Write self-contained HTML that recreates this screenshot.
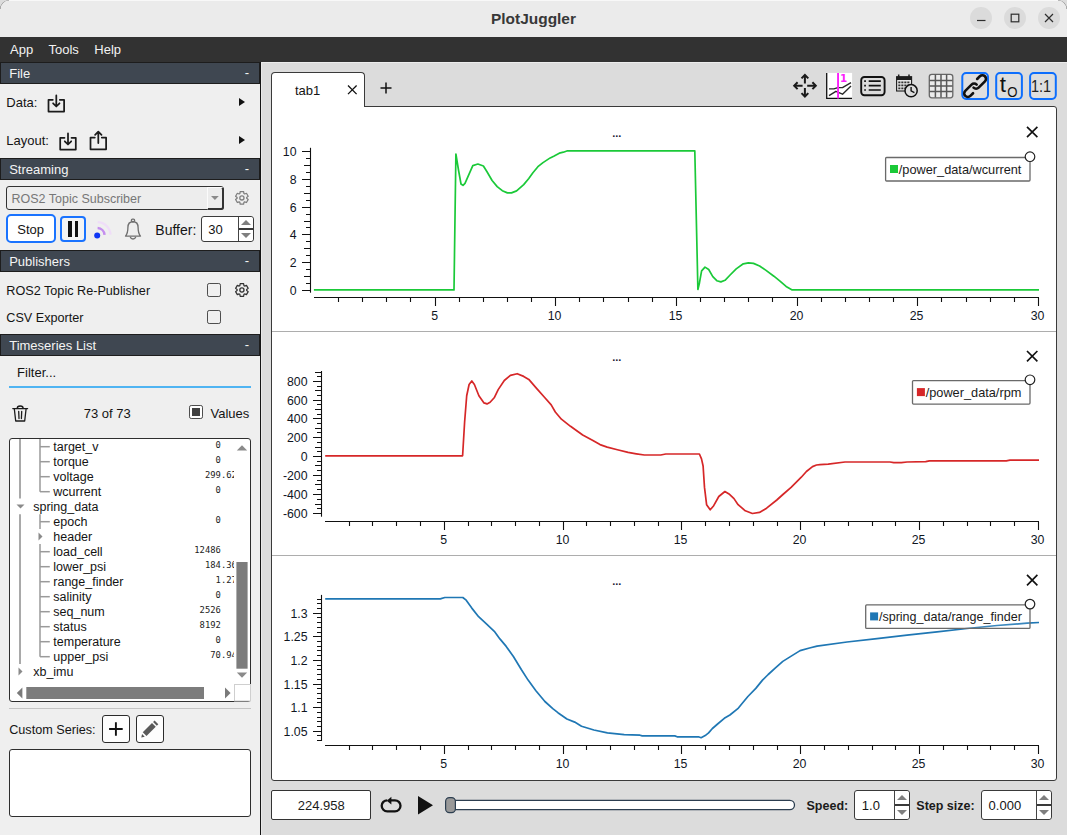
<!DOCTYPE html><html><head><meta charset="utf-8"><title>PlotJuggler</title><style>
*{box-sizing:border-box;margin:0;padding:0}
html,body{width:1067px;height:835px;overflow:hidden;background:#dcdcdc}
body{font-family:"Liberation Sans", "DejaVu Sans", sans-serif;font-size:13px;color:#141414;position:relative}
.abs{position:absolute}
#win{position:absolute;left:0;top:0;width:1067px;height:835px;background:#efefef;border-radius:9px 9px 0 0;overflow:hidden}
#title{position:absolute;left:0;top:0;width:1067px;height:37px;background:#ebebeb;box-shadow:inset 0 1px 0 #f8f8f8}
#title .t{position:absolute;left:0;width:1067px;top:10.6px;text-align:center;font-weight:bold;font-size:15.45px;color:#383838;line-height:16px}
.wb{position:absolute;top:7px;width:22px;height:22px;border-radius:11px;background:#dbdbdb}
#menu{position:absolute;left:0;top:37px;width:1067px;height:25px;background:#323232;color:#f2f2f2}
#menu span{position:absolute;top:5px;line-height:15px;font-size:13px}
#left{position:absolute;left:0;top:62px;width:260px;height:773px;background:#efefef}
#right{position:absolute;left:260px;top:62px;width:807px;height:773px;background:#dcdcdc}
.hdr{position:absolute;left:0;width:260px;height:22px;background:#3f4751;border:1px solid #1d1d1d;color:#f4f4f4;font-size:13px;line-height:21px;padding-left:8.2px}
.hdr i{position:absolute;right:10px;top:-1px;font-style:normal}
.lbl{position:absolute;white-space:pre;line-height:16px;font-size:13px}
.cb{position:absolute;width:14px;height:14px;border:1.2px solid #4d4d4d;border-radius:2.2px;background:transparent}
.btn{position:absolute;border:1px solid #2b2b2b;border-radius:3px;background:#fdfdfd}
.bbtn{position:absolute;border:2px solid #1a73ff;border-radius:5px}
.spin{position:absolute;border:1px solid #3a3a3a;border-radius:3px;background:#fff}
.spin .v{position:absolute;left:8px;top:0;line-height:100%;font-size:13px}
.spin .ud{position:absolute;right:0;top:0;width:15px;height:100%;border-left:1px solid #444;background:#fff;border-radius:0 3px 3px 0}
.tree{position:absolute;font-size:12.5px}
.tree .r{position:absolute;white-space:pre;line-height:15px;height:15px}
.tree .m{position:absolute;white-space:pre;line-height:15px;height:15px;font-family:"DejaVu Sans Mono", "Liberation Mono", monospace;font-size:8.8px;text-align:right;color:#222}
svg{position:absolute;left:0;top:0;overflow:visible}
svg text{font-family:"Liberation Sans", "DejaVu Sans", sans-serif;fill:#10161f}
</style></head><body><div id="win"><div id="title"><div class="t">PlotJuggler</div><div class="wb" style="left:970px"></div><div class="wb" style="left:1004px"></div><div class="wb" style="left:1038px"></div><svg width="1067" height="37" viewBox="0 0 1067 37" fill="none" stroke="#2e2e2e" stroke-width="1.2"><path d="M977 20.5h8.5"/><rect x="1011.2" y="14.2" width="7.6" height="7.6"/><path d="M1045 14l8 8M1053 14l-8 8"/></svg><svg width="1067" height="12" viewBox="0 0 1067 12" fill="none" stroke="#7e7e7e" stroke-width="1.1"><path d="M0 9A9 9 0 0 1 9 0"/><path d="M1058 0A9 9 0 0 1 1067 9"/></svg></div><div id="menu"><span style="left:10px">App</span><span style="left:48.5px">Tools</span><span style="left:94.3px">Help</span></div><div id="left"><div class="hdr" style="top:0px">File<i>-</i></div><div class="hdr" style="top:96px">Streaming<i>-</i></div><div class="hdr" style="top:188px">Publishers<i>-</i></div><div class="hdr" style="top:272px">Timeseries List<i>-</i></div><div class="lbl" style="left:6.3px;top:32.5px;">Data<span>:</span></div><div class="lbl" style="left:6.3px;top:70.5px;">Layout:</div><div class="lbl" style="left:6.3px;top:220.5px;font-size:12.65px">ROS2 Topic Re-Publisher</div><div class="lbl" style="left:6.3px;top:247.5px;font-size:12.65px">CSV Exporter</div><div class="lbl" style="left:155.3px;top:159.8px;font-size:14px">Buffer:</div><div class="lbl" style="left:17.1px;top:302.5px;">Filter...</div><div class="lbl" style="left:83.7px;top:343.5px;">73 of 73</div><div class="lbl" style="left:210.5px;top:343.5px;">Values</div><div class="lbl" style="left:9.2px;top:659.5px;font-size:12.65px">Custom Series:</div><svg width="260" height="773" viewBox="0 62 260 773"><g transform="translate(47.3,94.5)" fill="none" stroke="#1b1b1b" stroke-width="1.75" stroke-linejoin="round" stroke-linecap="round"><path d="M5.5 5.3H1.2V17h15.6V5.3H12.5"/><path d="M9 0.9V11.500M5.800 8.800L9 12l3.200-3.200"/></g><g transform="translate(59,132.5)" fill="none" stroke="#1b1b1b" stroke-width="1.75" stroke-linejoin="round" stroke-linecap="round"><path d="M5.5 5.3H1.2V17h15.6V5.3H12.5"/><path d="M9 0.9V11.500M5.800 8.800L9 12l3.200-3.200"/></g><g transform="translate(89.3,130.5)" fill="none" stroke="#1b1b1b" stroke-width="1.75" stroke-linejoin="round" stroke-linecap="round"><path d="M5.5 7H1.2V18.800h15.6V7H12.5"/><path d="M9 12.500V1.500M5.800 4.400L9 1.200l3.200 3.200"/></g><path d="M239 98l6 4-6 4z" fill="#111"/><path d="M239 136l6 4-6 4z" fill="#111"/><path d="M240.17 191.64L243.63 191.64L243.94 193.56L244.64 193.96L246.46 193.27L248.19 196.27L246.68 197.50L246.68 198.30L248.19 199.53L246.46 202.53L244.64 201.84L243.94 202.24L243.63 204.16L240.17 204.16L239.86 202.24L239.16 201.84L237.34 202.53L235.61 199.53L237.12 198.30L237.12 197.50L235.61 196.27L237.34 193.27L239.16 193.96L239.86 193.56Z" fill="none" stroke="#7e7e7e" stroke-width="1.25" stroke-linejoin="round"/><circle cx="241.9" cy="197.9" r="2.1" fill="none" stroke="#7e7e7e" stroke-width="1.3"/><path d="M240.17 283.74L243.63 283.74L243.94 285.66L244.64 286.06L246.46 285.37L248.19 288.37L246.68 289.60L246.68 290.40L248.19 291.63L246.46 294.63L244.64 293.94L243.94 294.34L243.63 296.26L240.17 296.26L239.86 294.34L239.16 293.94L237.34 294.63L235.61 291.63L237.12 290.40L237.12 289.60L235.61 288.37L237.34 285.37L239.16 286.06L239.86 285.66Z" fill="none" stroke="#333" stroke-width="1.25" stroke-linejoin="round"/><circle cx="241.9" cy="290" r="2.1" fill="none" stroke="#333" stroke-width="1.3"/><circle cx="97.200" cy="235.500" r="3" fill="#0f37f5"/><path d="M97.600 228.100A7.400 7.400 0 0 1 104.570 234.860" fill="none" stroke="#c48eee" stroke-width="2.500"/><path d="M97.670 222.100A13.400 13.400 0 0 1 110.570 234.560" fill="none" stroke="#efddf8" stroke-width="2.200"/><g fill="none" stroke="#707070" stroke-width="1.350" stroke-linejoin="round" stroke-linecap="round"><rect x="131.400" y="219.100" width="3.200" height="2.600" rx="1.100"/><path d="M125.500 236.100C127.600 233.600 127.900 230 127.900 227.500C127.900 224 130 221.700 133 221.700C136 221.700 138.100 224 138.100 227.500C138.100 230 138.400 233.600 140.500 236.100Z"/><path d="M130.400 237.300a2.700 2.300 0 0 0 5.200 0"/></g><g fill="none" stroke="#1b1b1b" stroke-width="1.3" stroke-linejoin="round" stroke-linecap="round"><path d="M12.800 408.600h14.800M17.200 408.400c0-3.200 6-3.200 6 0"/><path d="M14.300 408.800l1.400 12.200h9l1.400-12.200"/><path d="M18.700 411.500l.3 7M21.700 411.500l-.3 7"/></g><path d="M109.100 729h13.600M115.900 722.200v13.600" stroke="#111" stroke-width="1.9" fill="none"/><g transform="translate(149.800 729.150) scale(1.17) translate(-150.500 -728.500)"><path d="M143.200 735.700l0.700-3 2.300 2.300z" fill="#555"/><path d="M144.500 731.200l7.900-7.900 3.200 3.200-7.900 7.900z" fill="#5a5a5a"/><path d="M153.300 722.400l1.300-1.300 3.200 3.200-1.300 1.300z" fill="#5a5a5a"/></g></svg><div class="abs" style="left:6.2px;top:124.2px;width:217.5px;height:23.4px;border:1px solid #333;border-radius:3px;background:#ededed"></div><div class="abs" style="left:207.2px;top:125.2px;width:16.5px;height:22.4px;border-left:1px solid #fbfbfb;border-top:1px solid #fbfbfb;border-right:2.5px solid #333;border-bottom:2.3px solid #333;border-radius:0 3px 3px 0;background:#ececec"></div><svg width="260" height="773" viewBox="0 62 260 773"><path d="M211 196h7.800l-3.900 3.900z" fill="#8a8a8a"/></svg><div class="lbl" style="left:11.5px;top:129.2px;font-size:12.5px;color:#777">ROS2 Topic Subscriber</div><div class="bbtn" style="left:6.2px;top:152.2px;width:49.400px;height:29.300px;background:#fff;border-radius:5px"></div><div class="lbl" style="left:17.3px;top:159.5px;font-size:13px">Stop</div><div class="bbtn" style="left:60.300px;top:154.200px;width:25.500px;height:25.500px;background:#f4f4f4;border-radius:4px"></div><div class="abs" style="left:67.800px;top:158.800px;width:4.1px;height:16.2px;background:#111"></div><div class="abs" style="left:74.500px;top:158.800px;width:3.9px;height:16.2px;background:#111"></div><div class="spin" style="left:201px;top:154px;width:53px;height:26px"><div class="v" style="left:6.2px;top:1px;line-height:24px">30</div><div class="ud"><div class="abs" style="left:0;top:11.2px;width:15px;height:1.5px;background:#3a3a3a"></div><div class="abs" style="left:1.500px;top:2.8px;border:5.700px solid transparent;border-bottom:5.800px solid #7f7f7f;border-top:none"></div><div class="abs" style="left:1.500px;top:16.4px;border:5.700px solid transparent;border-top:5.800px solid #7f7f7f;border-bottom:none"></div></div></div><div class="cb" style="left:207px;top:221.200px"></div><div class="cb" style="left:207px;top:248.300px"></div><div class="cb" style="left:189px;top:343.300px;background:#fff"><div class="abs" style="left:1.800px;top:1.800px;width:8px;height:8px;background:#414141"></div></div><div class="abs" style="left:9px;top:323.800px;width:242px;height:2.200px;background:#50b4f2"></div><div class="abs" style="left:9.200px;top:376px;width:242px;height:263.800px;border:1px solid #2e2e2e;border-radius:3px;background:#fff;overflow:hidden"></div><div class="tree" style="left:0;top:0"><div class="r" style="left:53.3px;top:377.8px">target_v</div><div class="m" style="left:180px;top:375.9px;width:40.800px">0</div><div class="r" style="left:53.3px;top:392.8px">torque</div><div class="m" style="left:180px;top:390.9px;width:40.800px">0</div><div class="r" style="left:53.3px;top:407.8px">voltage</div><div class="m" style="left:205.0px;top:405.9px;width:28.6px;overflow:hidden;text-align:left">299.62</div><div class="r" style="left:53.3px;top:422.8px">wcurrent</div><div class="m" style="left:180px;top:420.9px;width:40.800px">0</div><div class="r" style="left:33.2px;top:437.8px">spring_data</div><div class="r" style="left:53.3px;top:452.8px">epoch</div><div class="m" style="left:180px;top:450.9px;width:40.800px">0</div><div class="r" style="left:53.3px;top:467.8px">header</div><div class="r" style="left:53.3px;top:482.8px">load_cell</div><div class="m" style="left:180px;top:480.9px;width:40.800px">12486</div><div class="r" style="left:53.3px;top:497.8px">lower_psi</div><div class="m" style="left:205.0px;top:495.9px;width:28.6px;overflow:hidden;text-align:left">184.36</div><div class="r" style="left:53.3px;top:512.8px">range_finder</div><div class="m" style="left:215.6px;top:510.9px;width:18.0px;overflow:hidden;text-align:left">1.27</div><div class="r" style="left:53.3px;top:527.8px">salinity</div><div class="m" style="left:180px;top:525.9px;width:40.800px">0</div><div class="r" style="left:53.3px;top:542.8px">seq_num</div><div class="m" style="left:180px;top:540.9px;width:40.800px">2526</div><div class="r" style="left:53.3px;top:557.8px">status</div><div class="m" style="left:180px;top:555.9px;width:40.800px">8192</div><div class="r" style="left:53.3px;top:572.8px">temperature</div><div class="m" style="left:180px;top:570.9px;width:40.800px">0</div><div class="r" style="left:53.3px;top:587.8px">upper_psi</div><div class="m" style="left:210.3px;top:585.9px;width:23.3px;overflow:hidden;text-align:left">70.94</div><div class="r" style="left:33.2px;top:602.8px">xb_imu</div></div><svg width="260" height="773" viewBox="0 62 260 773"><path d="M20 439V498.500" stroke="#9a9a9a" stroke-width="1.7"/><path d="M20 514.200V664" stroke="#9a9a9a" stroke-width="1.7"/><path d="M40 439V491.800" stroke="#9a9a9a" stroke-width="1.5"/><path d="M40 446.7H49.800" stroke="#9a9a9a" stroke-width="1.5"/><path d="M40 461.7H49.800" stroke="#9a9a9a" stroke-width="1.5"/><path d="M40 476.7H49.800" stroke="#9a9a9a" stroke-width="1.5"/><path d="M40 491.7H49.800" stroke="#9a9a9a" stroke-width="1.5"/><path d="M40 514.200V529M40 544V656.800" stroke="#9a9a9a" stroke-width="1.5"/><path d="M40 521.7H49.800" stroke="#9a9a9a" stroke-width="1.5"/><path d="M40 551.7H49.800" stroke="#9a9a9a" stroke-width="1.5"/><path d="M40 566.7H49.800" stroke="#9a9a9a" stroke-width="1.5"/><path d="M40 581.7H49.800" stroke="#9a9a9a" stroke-width="1.5"/><path d="M40 596.7H49.800" stroke="#9a9a9a" stroke-width="1.5"/><path d="M40 611.7H49.800" stroke="#9a9a9a" stroke-width="1.5"/><path d="M40 626.7H49.800" stroke="#9a9a9a" stroke-width="1.5"/><path d="M40 641.7H49.800" stroke="#9a9a9a" stroke-width="1.5"/><path d="M40 656.7H49.800" stroke="#9a9a9a" stroke-width="1.5"/><path d="M16.500 504.500h8l-4 4z" fill="#8a8a8a"/><path d="M38.500 532.500v8l4-4z" fill="#8a8a8a"/><path d="M18.500 667.500v8l4-4z" fill="#8a8a8a"/><path d="M236.800 450.500h10.400l-5.200-5.200z" fill="#8a8a8a"/><rect x="236.400" y="562" width="11.200" height="106.700" fill="#7c7c7c"/><path d="M236.800 672.500h10.400l-5.200 5.200z" fill="#8a8a8a"/><rect x="26.300" y="687" width="177.700" height="12" fill="#7c7c7c"/><path d="M22.400 687.500v11l-5.600-5.500z" fill="#7a7a7a"/><path d="M225 687.500v11l5.600-5.500z" fill="#7a7a7a"/><rect x="234.500" y="684.500" width="16" height="16.500" fill="#fff" stroke="#cfcfcf" stroke-width="1"/></svg><div class="abs" style="left:9px;top:646.300px;width:242px;height:1px;background:#c4c4c4"></div><div class="btn" style="left:102px;top:653px;width:27.700px;height:27.800px"></div><div class="btn" style="left:136.200px;top:653px;width:27.700px;height:27.800px"></div><div class="abs" style="left:9.200px;top:687.300px;width:242px;height:68px;border:1px solid #2e2e2e;border-radius:3px;background:#fff"></div><svg width="260" height="773" viewBox="0 62 260 773"><path d="M109.100 729h13.600M115.900 722.200v13.600" stroke="#111" stroke-width="1.9" fill="none"/><g transform="translate(149.800 729.150) scale(1.17) translate(-150.500 -728.500)"><path d="M143.200 735.700l0.700-3 2.300 2.300z" fill="#555"/><path d="M144.500 731.200l7.900-7.900 3.200 3.200-7.900 7.900z" fill="#5a5a5a"/><path d="M153.300 722.400l1.300-1.300 3.200 3.200-1.300 1.300z" fill="#5a5a5a"/></g></svg></div><div id="right"><div class="abs" style="left:1px;top:0;width:806px;height:1px;background:#ececec"></div><div class="abs" style="left:0;top:0;width:1.1px;height:773px;background:#151515"></div><div class="abs" style="left:1px;top:0;width:1px;height:773px;background:#e8e8e8"></div><div class="abs" style="left:11px;top:44px;width:786px;height:675px;background:#fff;border:1px solid #3a3a3a;border-radius:0 3px 3px 3px"></div><div class="abs" style="left:11px;top:10px;width:94px;height:35px;background:#fff;border:1px solid #3a3a3a;border-bottom:none;border-radius:4px 4px 0 0"></div><div class="lbl" style="left:35px;top:20.700000000000003px;">tab1</div></div><svg width="1067" height="835" viewBox="0 0 1067 835"><path d="M348 85.500l8.600 8.600M356.600 85.500l-8.600 8.600" stroke="#111" stroke-width="1.3" fill="none"/><path d="M380.500 88h11M386 82.500v11" stroke="#111" stroke-width="1.5" fill="none"/><path d="M272 331.500H1056M272 555.500H1056" stroke="#adadad" stroke-width="1"/><path d="M310.5 147.8V292.7" stroke="#111" stroke-width="1.1"/><path d="M302.0 290.5H310.5M306.0 283.5H310.5M304.0 276.5H310.5M306.0 269.5H310.5M302.0 262.5H310.5M306.0 255.5H310.5M304.0 248.5H310.5M306.0 241.5H310.5M302.0 234.5H310.5M306.0 227.5H310.5M304.0 221.5H310.5M306.0 214.5H310.5M302.0 207.5H310.5M306.0 200.5H310.5M304.0 193.5H310.5M306.0 186.5H310.5M302.0 179.5H310.5M306.0 172.5H310.5M304.0 165.5H310.5M306.0 158.5H310.5M302.0 151.5H310.5" stroke="#111" stroke-width="1.1"/><text x="296.5" y="294.9" text-anchor="end" font-size="12.3">0</text><text x="296.5" y="266.9" text-anchor="end" font-size="12.3">2</text><text x="296.5" y="238.9" text-anchor="end" font-size="12.3">4</text><text x="296.5" y="211.9" text-anchor="end" font-size="12.3">6</text><text x="296.5" y="183.9" text-anchor="end" font-size="12.3">8</text><text x="296.5" y="155.9" text-anchor="end" font-size="12.3">10</text><path d="M314 297.5H1039.0" stroke="#111" stroke-width="1.1"/><text x="434.6" y="320" text-anchor="middle" font-size="12.3">5</text><text x="554.6" y="320" text-anchor="middle" font-size="12.3">10</text><text x="675.6" y="320" text-anchor="middle" font-size="12.3">15</text><text x="796.6" y="320" text-anchor="middle" font-size="12.3">20</text><text x="916.6" y="320" text-anchor="middle" font-size="12.3">25</text><text x="1037.6" y="320" text-anchor="middle" font-size="12.3">30</text><path d="M338.5 297.5v4.5M362.5 297.5v4.5M386.5 297.5v4.5M410.5 297.5v4.5M435.5 297.5v8.5M459.5 297.5v4.5M483.5 297.5v4.5M507.5 297.5v4.5M531.5 297.5v4.5M555.5 297.5v8.5M579.5 297.5v4.5M603.5 297.5v4.5M628.5 297.5v4.5M652.5 297.5v4.5M676.5 297.5v8.5M700.5 297.5v4.5M724.5 297.5v4.5M748.5 297.5v4.5M772.5 297.5v4.5M797.5 297.5v8.5M821.5 297.5v4.5M845.5 297.5v4.5M869.5 297.5v4.5M893.5 297.5v4.5M917.5 297.5v8.5M941.5 297.5v4.5M966.5 297.5v4.5M990.5 297.5v4.5M1014.5 297.5v4.5M1038.5 297.5v8.5" stroke="#111" stroke-width="1.1"/><path d="M313.9 289.9L454.0 289.9L455.9 154.0L458.5 170.0L461.0 184.0L463.0 185.4L465.0 183.4L472.8 165.6L477.9 164.0L483.4 166.0L487.0 171.8L492.1 180.5L497.2 186.6L502.3 190.7L507.4 192.9L511.5 192.9L516.6 190.9L523.7 184.6L528.8 178.5L532.9 172.8L537.9 166.7L543.0 162.6L550.2 157.9L554.2 156.0L559.3 153.2L563.4 152.2L567.5 150.8L694.8 150.8L697.9 289.5L699.5 282.7L701.6 270.9L705.0 267.1L708.7 269.5L712.8 276.6L716.8 280.7L720.9 281.9L725.0 280.3L730.1 275.0L736.2 268.9L743.3 263.8L748.4 262.8L753.5 263.4L759.6 266.0L765.7 270.1L773.9 276.2L780.0 281.1L786.1 286.4L792.2 289.9L1039.0 289.9" fill="none" stroke="#1ac938" stroke-width="1.7" stroke-linejoin="round"/><text x="616.800" y="136.8" text-anchor="middle" font-size="11" font-weight="bold" style="fill:#1a2030">...</text><path d="M1027 126.8l10.400 10.400M1037.400 126.8l-10.400 10.400" stroke="#111" stroke-width="1.65" fill="none"/><rect x="885.6" y="157.5" width="144.39999999999998" height="23.500" fill="#fff" fill-opacity="0.12" stroke="#6a6a6a" stroke-width="1.3" rx="1"/><rect x="890.0" y="165.0" width="8" height="8" fill="#1ac938"/><text x="898.8" y="173.8" font-size="12.75" style="fill:#1b1b1b">/power_data/wcurrent</text><circle cx="1030" cy="156.7" r="4.800" fill="#fff" stroke="#222" stroke-width="1.2"/><path d="M321.5 371V516.7" stroke="#111" stroke-width="1.1"/><path d="M313.0 513.5H321.5M317.0 508.5H321.5M315.0 504.5H321.5M317.0 499.5H321.5M313.0 494.5H321.5M317.0 489.5H321.5M315.0 484.5H321.5M317.0 480.5H321.5M313.0 475.5H321.5M317.0 470.5H321.5M315.0 465.5H321.5M317.0 461.5H321.5M313.0 456.5H321.5M317.0 451.5H321.5M315.0 447.5H321.5M317.0 442.5H321.5M313.0 437.5H321.5M317.0 432.5H321.5M315.0 428.5H321.5M317.0 423.5H321.5M313.0 418.5H321.5M317.0 414.5H321.5M315.0 409.5H321.5M317.0 404.5H321.5M313.0 400.5H321.5M317.0 395.5H321.5M315.0 390.5H321.5M317.0 386.5H321.5M313.0 381.5H321.5M317.0 376.5H321.5M315.0 372.5H321.5" stroke="#111" stroke-width="1.1"/><text x="307.5" y="517.9" text-anchor="end" font-size="12.3">-600</text><text x="307.5" y="498.9" text-anchor="end" font-size="12.3">-400</text><text x="307.5" y="479.9" text-anchor="end" font-size="12.3">-200</text><text x="307.5" y="460.9" text-anchor="end" font-size="12.3">0</text><text x="307.5" y="441.9" text-anchor="end" font-size="12.3">200</text><text x="307.5" y="422.9" text-anchor="end" font-size="12.3">400</text><text x="307.5" y="404.9" text-anchor="end" font-size="12.3">600</text><text x="307.5" y="385.9" text-anchor="end" font-size="12.3">800</text><path d="M325 521.5H1039.0" stroke="#111" stroke-width="1.1"/><text x="443.6" y="544" text-anchor="middle" font-size="12.3">5</text><text x="562.6" y="544" text-anchor="middle" font-size="12.3">10</text><text x="680.6" y="544" text-anchor="middle" font-size="12.3">15</text><text x="799.6" y="544" text-anchor="middle" font-size="12.3">20</text><text x="918.6" y="544" text-anchor="middle" font-size="12.3">25</text><text x="1037.6" y="544" text-anchor="middle" font-size="12.3">30</text><path d="M349.5 521.5v4.5M372.5 521.5v4.5M396.5 521.5v4.5M420.5 521.5v4.5M444.5 521.5v8.5M468.5 521.5v4.5M491.5 521.5v4.5M515.5 521.5v4.5M539.5 521.5v4.5M563.5 521.5v8.5M586.5 521.5v4.5M610.5 521.5v4.5M634.5 521.5v4.5M658.5 521.5v4.5M681.5 521.5v8.5M705.5 521.5v4.5M729.5 521.5v4.5M753.5 521.5v4.5M777.5 521.5v4.5M800.5 521.5v8.5M824.5 521.5v4.5M848.5 521.5v4.5M872.5 521.5v4.5M895.5 521.5v4.5M919.5 521.5v8.5M943.5 521.5v4.5M967.5 521.5v4.5M990.5 521.5v4.5M1014.5 521.5v4.5M1038.5 521.5v8.5" stroke="#111" stroke-width="1.1"/><path d="M325.2 455.8L462.6 455.8L464.6 422.2L466.7 395.7L469.1 384.5L471.8 380.9L474.4 384.5L478.9 395.7L484.0 402.9L487.0 403.9L490.1 402.3L494.2 397.8L498.2 389.6L504.3 380.5L510.4 375.4L517.2 373.7L523.7 376.4L528.8 379.4L535.9 387.6L544.0 396.8L551.2 404.9L555.3 412.0L561.4 419.2L570.5 426.3L582.7 435.0L592.9 440.5L600.0 444.6L607.2 447.1L617.4 449.7L628.1 452.4L636.3 453.8L644.4 455.0L660.7 455.0L665.8 454.0L699.4 454.0L701.5 458.9L703.1 466.0L704.5 487.4L706.6 504.7L710.2 509.8L713.7 505.7L718.8 496.5L724.9 491.5L729.0 493.9L734.0 498.6L738.1 504.7L745.3 510.8L752.4 513.5L759.5 512.4L766.6 508.2L776.8 500.0L782.9 494.5L791.1 487.4L801.3 477.2L806.4 471.5L812.5 466.6L816.5 465.0L820.0 464.6L828.2 464.2L845.0 462.0L890.0 462.0L893.8 462.7L901.3 462.7L907.0 462.0L925.7 461.6L929.4 460.8L1006.3 460.8L1010.0 460.1L1039.0 460.1" fill="none" stroke="#d62728" stroke-width="1.7" stroke-linejoin="round"/><text x="616.800" y="360.8" text-anchor="middle" font-size="11" font-weight="bold" style="fill:#1a2030">...</text><path d="M1027 351.0l10.400 10.400M1037.400 351.0l-10.400 10.400" stroke="#111" stroke-width="1.65" fill="none"/><rect x="912.5" y="380.6" width="117.5" height="23.500" fill="#fff" fill-opacity="0.12" stroke="#6a6a6a" stroke-width="1.3" rx="1"/><rect x="916.9" y="388.1" width="8" height="8" fill="#d62728"/><text x="925.7" y="396.9" font-size="12.75" style="fill:#1b1b1b">/power_data/rpm</text><circle cx="1030" cy="379.8" r="4.800" fill="#fff" stroke="#222" stroke-width="1.2"/><path d="M321.5 594.9V741" stroke="#111" stroke-width="1.1"/><path d="M317.0 740.5H321.5M317.0 735.5H321.5M313.0 731.5H321.5M317.0 726.5H321.5M317.0 721.5H321.5M317.0 717.5H321.5M317.0 712.5H321.5M313.0 707.5H321.5M317.0 702.5H321.5M317.0 698.5H321.5M317.0 693.5H321.5M317.0 688.5H321.5M313.0 684.5H321.5M317.0 679.5H321.5M317.0 674.5H321.5M317.0 669.5H321.5M317.0 665.5H321.5M313.0 660.5H321.5M317.0 655.5H321.5M317.0 650.5H321.5M317.0 646.5H321.5M317.0 641.5H321.5M313.0 636.5H321.5M317.0 632.5H321.5M317.0 627.5H321.5M317.0 622.5H321.5M317.0 617.5H321.5M313.0 613.5H321.5M317.0 608.5H321.5M317.0 603.5H321.5M317.0 599.5H321.5" stroke="#111" stroke-width="1.1"/><text x="307.5" y="735.9" text-anchor="end" font-size="12.3">1.05</text><text x="307.5" y="711.9" text-anchor="end" font-size="12.3">1.1</text><text x="307.5" y="688.9" text-anchor="end" font-size="12.3">1.15</text><text x="307.5" y="664.9" text-anchor="end" font-size="12.3">1.2</text><text x="307.5" y="640.9" text-anchor="end" font-size="12.3">1.25</text><text x="307.5" y="617.9" text-anchor="end" font-size="12.3">1.3</text><path d="M325 745.5H1039.0" stroke="#111" stroke-width="1.1"/><text x="443.6" y="768" text-anchor="middle" font-size="12.3">5</text><text x="562.6" y="768" text-anchor="middle" font-size="12.3">10</text><text x="680.6" y="768" text-anchor="middle" font-size="12.3">15</text><text x="799.6" y="768" text-anchor="middle" font-size="12.3">20</text><text x="918.6" y="768" text-anchor="middle" font-size="12.3">25</text><text x="1037.6" y="768" text-anchor="middle" font-size="12.3">30</text><path d="M349.5 745.5v4.5M372.5 745.5v4.5M396.5 745.5v4.5M420.5 745.5v4.5M444.5 745.5v8.5M468.5 745.5v4.5M491.5 745.5v4.5M515.5 745.5v4.5M539.5 745.5v4.5M563.5 745.5v8.5M586.5 745.5v4.5M610.5 745.5v4.5M634.5 745.5v4.5M658.5 745.5v4.5M681.5 745.5v8.5M705.5 745.5v4.5M729.5 745.5v4.5M753.5 745.5v4.5M777.5 745.5v4.5M800.5 745.5v8.5M824.5 745.5v4.5M848.5 745.5v4.5M872.5 745.5v4.5M895.5 745.5v4.5M919.5 745.5v8.5M943.5 745.5v4.5M967.5 745.5v4.5M990.5 745.5v4.5M1014.5 745.5v4.5M1038.5 745.5v8.5" stroke="#111" stroke-width="1.1"/><path d="M325.2 598.9L440.3 598.9L444.8 597.5L462.8 597.5L466.2 600.2L471.8 608.1L478.6 616.7L486.4 623.9L494.3 631.3L499.9 638.9L506.2 646.4L513.4 656.5L521.3 669.5L528.1 680.1L535.9 690.7L544.9 701.5L552.8 708.7L557.9 712.7L566.9 719.0L574.7 722.1L581.5 726.2L593.9 730.0L607.4 732.9L624.2 734.7L640.0 735.2L642.2 735.9L674.8 735.9L677.1 736.8L698.4 736.8L701.1 737.7L705.2 735.6L708.6 732.9L712.4 728.5L717.6 724.0L724.3 718.3L729.9 715.0L737.8 708.7L742.3 703.3L747.9 696.5L755.8 688.4L762.5 680.1L768.2 674.5L774.9 668.4L782.8 661.4L790.0 656.9L800.1 650.6L809.5 648.0L817.0 646.1L847.0 642.0L877.0 638.6L907.0 635.2L937.0 631.9L967.0 628.5L997.0 625.5L1027.0 623.2L1039.0 622.5" fill="none" stroke="#1f77b4" stroke-width="1.7" stroke-linejoin="round"/><text x="616.800" y="584.8" text-anchor="middle" font-size="11" font-weight="bold" style="fill:#1a2030">...</text><path d="M1027 574.9l10.400 10.400M1037.400 574.9l-10.400 10.400" stroke="#111" stroke-width="1.65" fill="none"/><rect x="865.7" y="604.9" width="164.29999999999995" height="23.500" fill="#fff" fill-opacity="0.12" stroke="#6a6a6a" stroke-width="1.3" rx="1"/><rect x="870.1" y="612.4" width="8" height="8" fill="#1f77b4"/><text x="878.9" y="621.2" font-size="12.55" style="fill:#1b1b1b">/spring_data/range_finder</text><circle cx="1030" cy="604.1" r="4.800" fill="#fff" stroke="#222" stroke-width="1.2"/><g fill="none" stroke="#1a1a1a" stroke-width="2" stroke-linejoin="miter"><path d="M794.400 85.700H802.600M807.200 85.700H815.600M804.900 75.200V83.400M804.900 88V96.300"/><path d="M797.600 82.300L794.200 85.700L797.600 89.100M812.400 82.300L815.800 85.700L812.400 89.100M801.500 78.400L804.900 75L808.300 78.400M801.500 93.100L804.900 96.500L808.300 93.100"/></g><rect x="826.300" y="72.900" width="25.800" height="25.600" fill="#fff"/><path d="M826.700 72.900V98.300H852" stroke="#111" stroke-width="1.300" fill="none"/><path d="M829 88.900L833.900 88.900L837.900 87.600L842.500 87.600L851 82.600M829 95.600L835.900 91.300L842.500 94.200L851 86" stroke="#2a2a2a" stroke-width="1.400" fill="none" stroke-linejoin="round"/><path d="M838.050 72.900v25.600" stroke="#fb1ffb" stroke-width="1.900"/><text x="840" y="81.800" font-size="10.400" font-weight="bold" style="fill:#fb1ffb;font-family:'DejaVu Sans','Liberation Sans',sans-serif">1</text><rect x="861.200" y="77" width="23.400" height="18.200" rx="3.200" fill="none" stroke="#111" stroke-width="1.900"/><path d="M868.700 81.200H880.800M868.700 85.600H880.800M868.700 90H880.800" stroke="#111" stroke-width="1.700"/><path d="M864.200 81.200h1.700M864.200 85.600h1.700M864.200 90h1.700" stroke="#111" stroke-width="1.700"/><g><rect x="896.600" y="76.700" width="15" height="14.300" fill="#e6e6e6" stroke="#1c1c1c" stroke-width="1.100"/><rect x="896.600" y="76.700" width="15" height="3.300" fill="#1c1c1c"/><path d="M898.700 74.600v3M909 74.600v3" stroke="#1c1c1c" stroke-width="1.500"/><path d="M898.300 82.400h12M898.300 85.400h12M898.300 88.400h12" stroke="#333" stroke-width="1.900" stroke-dasharray="2.100 0.900"/><circle cx="911.100" cy="90.700" r="6.100" fill="#dcdcdc" stroke="#111" stroke-width="1.500"/><path d="M911.100 87v3.900l3.300 1.700" stroke="#111" stroke-width="1.400" fill="none"/></g><rect x="929.300" y="74.300" width="23.500" height="23.500" rx="2.500" fill="#ececec" stroke="#666" stroke-width="1.300"/><path d="M935.4 74.500v23M929.500 80.4h23M941.0 74.500v23M929.500 86.0h23M946.6 74.500v23M929.500 91.6h23" stroke="#585858" stroke-width="1.500" fill="none"/><rect x="962.3" y="73" width="25.700" height="25.900" rx="3.800" fill="#dedede" stroke="#0d6efd" stroke-width="2"/><rect x="996.2" y="73" width="25.700" height="25.900" rx="3.800" fill="#dedede" stroke="#0d6efd" stroke-width="2"/><rect x="1030.1" y="73" width="25.700" height="25.900" rx="3.800" fill="#dedede" stroke="#0d6efd" stroke-width="2"/><g transform="translate(975.1 86.100) rotate(-45)" fill="none" stroke="#111" stroke-width="2.600" stroke-linecap="round"><path d="M6.500 -3.600L10.300 -3.600A3.600 3.600 0 0 1 10.300 3.600L1.400 3.600A3.600 3.600 0 0 1 -2.200 0"/><path d="M-6.500 3.600L-10.300 3.600A3.600 3.600 0 0 1 -10.300 -3.600L-1.400 -3.600A3.600 3.600 0 0 1 2.200 0"/></g><text x="999.800" y="92" font-size="22.500" style="fill:#111">t</text><text transform="translate(1007.200 96.800) scale(0.88 1)" font-size="15" style="fill:#111">O</text><text transform="translate(1041.100 92) scale(0.86 1)" font-size="16.900" text-anchor="middle" style="fill:#222">1:1</text><rect x="271.500" y="790.500" width="99" height="29" rx="1.500" fill="#fff" stroke="#333" stroke-width="1"/><text x="321.200" y="810" font-size="13" text-anchor="middle" style="fill:#1b1b1b">224.958</text><path d="M390.800 800.300H394.950A5.550 5.550 0 0 1 394.950 811.400H387.250A5.550 5.550 0 0 1 387.250 800.300" fill="none" stroke="#111" stroke-width="2.300" stroke-linecap="butt"/><path d="M386.700 800.700L391.400 796.800L391.400 804.600Z" fill="#111"/><path d="M418 796v18.500l15-9.200z" fill="#111"/><rect x="449" y="800.400" width="345.500" height="9.200" rx="4.600" fill="#fff" stroke="#2c3e50" stroke-width="1.300"/><rect x="445.600" y="797.600" width="9.800" height="15" rx="3.800" fill="#999" stroke="#2c3e50" stroke-width="1.200"/><text x="806.500" y="810" font-size="12.500" font-weight="bold" style="fill:#1b1b1b">Speed:</text><text x="916.300" y="810" font-size="12.500" font-weight="bold" style="fill:#1b1b1b">Step size:</text></svg><div class="spin" style="left:854px;top:790px;width:56px;height:30px"><div class="v" style="left:6.8px;top:0.5px;line-height:28px">1.0</div><div class="ud"><div class="abs" style="left:0;top:13.2px;width:15px;height:1.5px;background:#3a3a3a"></div><div class="abs" style="left:1.500px;top:3.8px;border:5.700px solid transparent;border-bottom:5.800px solid #7f7f7f;border-top:none"></div><div class="abs" style="left:1.500px;top:19.4px;border:5.700px solid transparent;border-top:5.800px solid #7f7f7f;border-bottom:none"></div></div></div><div class="spin" style="left:981px;top:790px;width:71px;height:30px"><div class="v" style="left:6.6px;top:0.5px;line-height:28px">0.000</div><div class="ud"><div class="abs" style="left:0;top:13.2px;width:15px;height:1.5px;background:#3a3a3a"></div><div class="abs" style="left:1.500px;top:3.8px;border:5.700px solid transparent;border-bottom:5.800px solid #7f7f7f;border-top:none"></div><div class="abs" style="left:1.500px;top:19.4px;border:5.700px solid transparent;border-top:5.800px solid #7f7f7f;border-bottom:none"></div></div></div></div></body></html>
